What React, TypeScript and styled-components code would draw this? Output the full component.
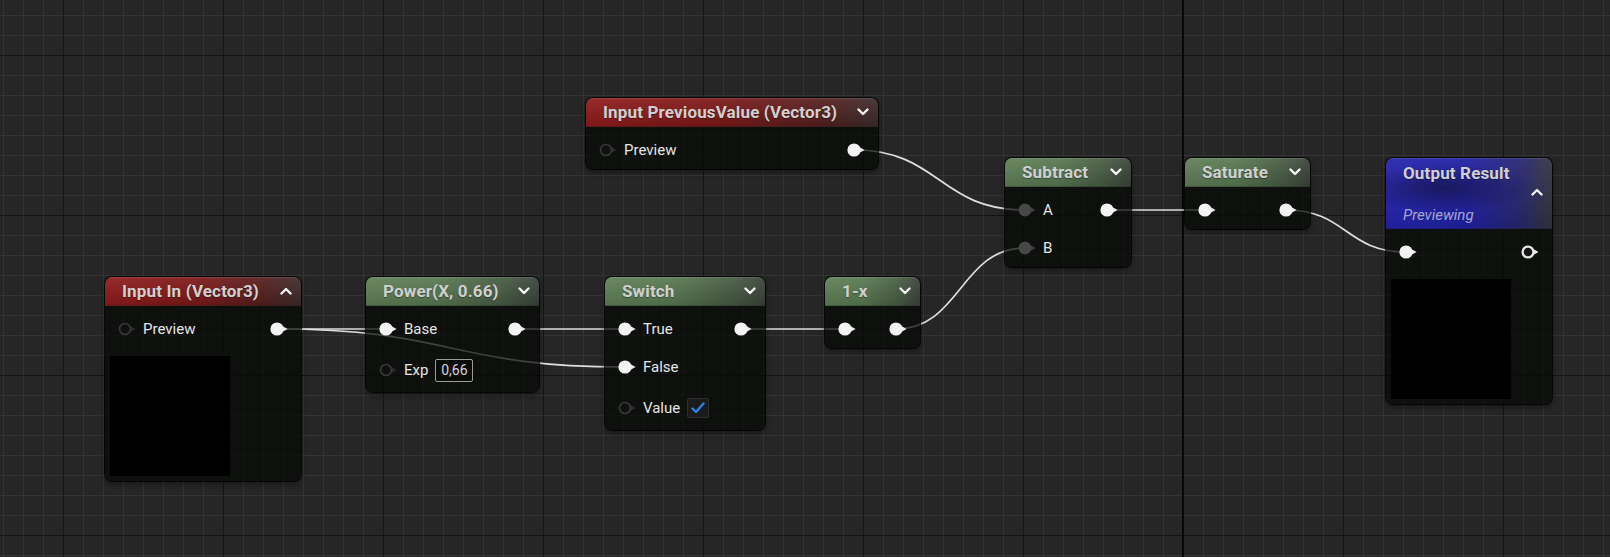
import * as React from 'react'
import styled, { createGlobalStyle } from 'styled-components'

const GlobalStyle = createGlobalStyle`
	html, body {
		margin: 0;
		padding: 0;
		background: #262626;
	}
	body {
		font-family: Roboto, "Noto Sans", "Liberation Sans", sans-serif;
	}
`

// grid: minor every 20px, major every 160px, one darker axis line
const Canvas = styled.div`
	position: relative;
	width: 1610px;
	height: 557px;
	overflow: hidden;
	background-color: #262626;
	background-image:
		linear-gradient(90deg, transparent 1182px, #070707 1182px, #070707 1184px, transparent 1184px),
		linear-gradient(90deg, #151515 1px, transparent 1px),
		linear-gradient(180deg, #151515 1px, transparent 1px),
		linear-gradient(90deg, #343434 1px, transparent 1px),
		linear-gradient(180deg, #343434 1px, transparent 1px);
	background-size: 100% 100%, 160px 160px, 160px 160px, 20px 20px, 20px 20px;
	background-position: 0 0, 63px 0, 0 55px, 3px 0, 0 15px;
	background-repeat: no-repeat, repeat, repeat, repeat, repeat;
`

const Wires = styled.svg`
	position: absolute;
	left: 0;
	top: 0;
	width: 1610px;
	height: 557px;
	pointer-events: none;
`

const NodeBox = styled.div<{ $x: number; $y: number; $w: number }>`
	position: absolute;
	left: ${p => p.$x}px;
	top: ${p => p.$y}px;
	width: ${p => p.$w}px;
	border-radius: 7px;
	background: rgba(6, 9, 6, 0.74);
	box-shadow: 0 0 0 1px rgba(0, 0, 0, 0.8), 0 3px 6px rgba(0, 0, 0, 0.45);
	overflow: hidden;
`

type Tone = 'red' | 'green' | 'blue'

const toneBg: Record<Tone, string> = {
	red: 'linear-gradient(90deg, #901b1b 0%, #7e1818 45%, #541f1f 82%, #3c2c2c 100%)',
	green: 'linear-gradient(90deg, #5f8056 0%, #587851 42%, #465a42 80%, #3a423a 100%)',
	blue:
		'radial-gradient(ellipse 55% 35% at 35% 42%, rgba(12, 12, 70, 0.75), transparent), linear-gradient(90deg, #2424b0 0%, #2020a2 50%, #262672 80%, #34343e 100%)',
}

const Header = styled.div<{ $tone: Tone }>`
	height: 29px;
	display: flex;
	align-items: center;
	justify-content: space-between;
	padding: 0 9px 0 17px;
	background: linear-gradient(180deg, rgba(255, 255, 255, 0.07), rgba(0, 0, 0, 0.12)), ${p => toneBg[p.$tone]};
	box-shadow: inset 0 1px 0 rgba(255, 255, 255, 0.1);
	border-bottom: 1px solid rgba(0, 0, 0, 0.35);
	box-sizing: border-box;
`

const OutputHeader = styled.div`
	height: 71px;
	display: grid;
	grid-template-columns: 1fr auto;
	grid-template-rows: 29px 9px 33px;
	padding: 0 9px 0 17px;
	background: linear-gradient(180deg, rgba(255, 255, 255, 0.06), rgba(0, 0, 0, 0.1)), ${toneBg.blue};
	box-shadow: inset 0 1px 0 rgba(255, 255, 255, 0.1);
	border-bottom: 1px solid rgba(0, 0, 0, 0.35);
	box-sizing: border-box;
`

const Title = styled.span`
	font-size: 17px;
	font-weight: 700;
	letter-spacing: 0.15px;
	color: #d0d0d0;
	white-space: nowrap;
	text-shadow: 0 1px 1px rgba(0, 0, 0, 0.35);
	align-self: center;
`

const ChevronSlot = styled.span`
	grid-column: 2;
	grid-row: 2;
	display: flex;
	align-items: center;
`

const Previewing = styled.span`
	grid-column: 1 / 3;
	grid-row: 3;
	align-self: end;
	padding-bottom: 4px;
	font-size: 15px;
	line-height: 20px;
	font-style: italic;
	color: #a4a4cc;
`

const Body = styled.div`
	display: flex;
	flex-direction: column;
	padding-top: 4px;
`

const Row = styled.div<{ $tall?: boolean }>`
	height: ${p => (p.$tall ? 44 : 38)}px;
	display: flex;
	align-items: center;
	justify-content: space-between;
	padding: 0 13px;
`

const Side = styled.div`
	display: flex;
	align-items: center;
	gap: 7px;
`

const Label = styled.span`
	font-size: 15px;
	color: #e6e6e6;
	white-space: nowrap;
`

const NumberBox = styled.span`
	width: 38px;
	height: 23px;
	box-sizing: border-box;
	display: flex;
	align-items: center;
	justify-content: center;
	border: 1px solid #9c9c9c;
	border-radius: 2px;
	background: rgba(0, 0, 0, 0.3);
	font-size: 14px;
	color: #d6d6d6;
`

const CheckBox = styled.span`
	width: 22px;
	height: 20px;
	box-sizing: border-box;
	display: flex;
	align-items: center;
	justify-content: center;
	border: 1px solid #2e2e2e;
	border-radius: 2px;
	background: #1b1b1b;
`

const PreviewSquare = styled.div`
	width: 120px;
	height: 120px;
	margin: 8px 0 5px 5px;
	background: #000;
`

const PinSvg = styled.svg`
	display: block;
	flex: none;
`

type PinKind = 'on' | 'off' | 'dim' | 'ring'

const Pin: React.FC<{ kind: PinKind }> = ({ kind }) => {
	const tri = kind === 'on' || kind === 'ring' ? '#ececec' : kind === 'dim' ? '#3d3d3d' : '#2c2c2c'
	return (
		<PinSvg width={18} height={14} viewBox="0 0 18 14">
			<path d="M12.2 4 L17.6 7 L12.2 10 Z" fill={tri} />
			{kind === 'on' && <circle cx={7} cy={7} r={6.6} fill="#f3f3f3" />}
			{kind === 'dim' && <circle cx={7} cy={7} r={6.5} fill="#474747" />}
			{kind === 'off' && <circle cx={7} cy={7} r={5.5} fill="#101010" stroke="#383838" strokeWidth={1.7} />}
			{kind === 'ring' && <circle cx={7} cy={7} r={5.4} fill="#141414" stroke="#e6e6e6" strokeWidth={2.3} />}
		</PinSvg>
	)
}

const Chevron: React.FC<{ up?: boolean }> = ({ up }) => (
	<svg width={12} height={8} viewBox="0 0 12 8">
		<polyline
			points={up ? '1.5,6.5 6,2 10.5,6.5' : '1.5,1.5 6,6 10.5,1.5'}
			fill="none"
			stroke="#f4f4f4"
			strokeWidth={2.4}
			strokeLinecap="round"
			strokeLinejoin="round"
		/>
	</svg>
)

const Check = () => (
	<svg width={14} height={12} viewBox="0 0 14 12">
		<polyline points="1.5,6.5 5,10 12.5,1.5" fill="none" stroke="#2d80e6" strokeWidth={2.4} strokeLinecap="round" strokeLinejoin="round" />
	</svg>
)

interface PinRow {
	in?: PinKind
	out?: PinKind
	label?: string
	number?: string
	check?: boolean
}

interface GraphNodeData {
	id: string
	x: number
	y: number
	w: number
	title: string
	tone: Tone
	up?: boolean
	rows: PinRow[]
	preview?: boolean
}

const nodes: GraphNodeData[] = [
	{ id: 'in', x: 105, y: 277, w: 196, title: 'Input In (Vector3)', tone: 'red', up: true, preview: true, rows: [{ in: 'off', label: 'Preview', out: 'on' }] },
	{ id: 'prev', x: 586, y: 98, w: 292, title: 'Input PreviousValue (Vector3)', tone: 'red', rows: [{ in: 'off', label: 'Preview', out: 'on' }] },
	{
		id: 'pow', x: 366, y: 277, w: 173, title: 'Power(X, 0.66)', tone: 'green',
		rows: [{ in: 'on', label: 'Base', out: 'on' }, { in: 'off', label: 'Exp', number: '0,66' }],
	},
	{
		id: 'sw', x: 605, y: 277, w: 160, title: 'Switch', tone: 'green',
		rows: [{ in: 'on', label: 'True', out: 'on' }, { in: 'on', label: 'False' }, { in: 'off', label: 'Value', check: true }],
	},
	{ id: 'inv', x: 825, y: 277, w: 95, title: '1-x', tone: 'green', rows: [{ in: 'on', out: 'on' }] },
	{ id: 'sub', x: 1005, y: 158, w: 126, title: 'Subtract', tone: 'green', rows: [{ in: 'dim', label: 'A', out: 'on' }, { in: 'dim', label: 'B' }] },
	{ id: 'sat', x: 1185, y: 158, w: 125, title: 'Saturate', tone: 'green', rows: [{ in: 'on', out: 'on' }] },
]

// pin centres: [from x, from y, to x, to y]
const links: [number, number, number, number][] = [
	[277, 329, 386, 329],
	[277, 329, 625, 367],
	[515, 329, 625, 329],
	[741, 329, 845, 329],
	[896, 329, 1025, 248],
	[854, 150, 1025, 210],
	[1107, 210, 1205, 210],
	[1286, 210, 1406, 252],
]

const wirePath = ([x1, y1, x2, y2]: [number, number, number, number]) => {
	const t = Math.max(Math.abs(x2 - x1) * 0.5, 20)
	return `M${x1} ${y1} C${x1 + t} ${y1}, ${x2 - t} ${y2}, ${x2} ${y2}`
}

const PinRowView: React.FC<{ row: PinRow }> = ({ row }) => (
	<Row $tall={!!row.number || !!row.check}>
		<Side>
			{row.in && <Pin kind={row.in} />}
			{row.label && <Label>{row.label}</Label>}
			{row.number && <NumberBox>{row.number}</NumberBox>}
			{row.check && (
				<CheckBox>
					<Check />
				</CheckBox>
			)}
		</Side>
		{row.out && <Pin kind={row.out} />}
	</Row>
)

const GraphNode: React.FC<{ node: GraphNodeData }> = ({ node }) => (
	<NodeBox $x={node.x} $y={node.y} $w={node.w}>
		<Header $tone={node.tone}>
			<Title>{node.title}</Title>
			<Chevron up={node.up} />
		</Header>
		<Body>
			{node.rows.map((r, i) => (
				<PinRowView key={i} row={r} />
			))}
			{node.preview && <PreviewSquare />}
		</Body>
	</NodeBox>
)

const OutputNode = () => (
	<NodeBox $x={1386} $y={158} $w={166}>
		<OutputHeader>
			<Title>Output Result</Title>
			<ChevronSlot>
				<Chevron up />
			</ChevronSlot>
			<Previewing>Previewing</Previewing>
		</OutputHeader>
		<Body>
			<PinRowView row={{ in: 'on', out: 'ring' }} />
			<PreviewSquare />
		</Body>
	</NodeBox>
)

export default function App() {
	return (
		<>
			<GlobalStyle />
			<Canvas>
				<Wires viewBox="0 0 1610 557">
					{links.map((l, i) => (
						<path key={i} d={wirePath(l)} fill="none" stroke="#dedede" strokeWidth={1.7} />
					))}
				</Wires>
				{nodes.map(n => (
					<GraphNode key={n.id} node={n} />
				))}
				<OutputNode />
			</Canvas>
		</>
	)
}
